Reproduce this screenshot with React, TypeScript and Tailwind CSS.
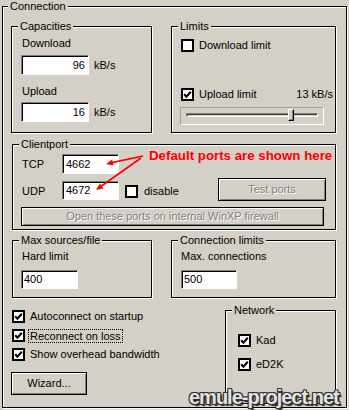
import React from "react";

type P = { children?: React.ReactNode; className?: string };

function Group({ label, className = "", children }: P & { label: string }) {
  return (
    <fieldset
      className={`m-0 p-0 min-w-0 border border-black shadow-[inset_1px_1px_0_#fff,1px_1px_0_#fff] ${className}`}
    >
      <legend className="ml-[6px] px-[2px] leading-[13px] bg-[#d4d0c8]">{label}</legend>
      {children}
    </fieldset>
  );
}

function Check({ checked = false, className = "" }: { checked?: boolean; className?: string }) {
  return (
    <span
      className={`w-[13px] h-[13px] shrink-0 border-2 border-black bg-white flex items-center justify-center ${className}`}
    >
      {checked && (
        <svg width="9" height="9" viewBox="0 0 9 9">
          <path d="M1.2 4.2 L3.4 6.6 L7.8 1.8" stroke="#000" strokeWidth="2.1" fill="none" />
        </svg>
      )}
    </span>
  );
}

function Field({ children, className = "" }: P) {
  return (
    <div
      className={`bg-white border border-t-[#808080] border-l-[#808080] border-r-white border-b-white shadow-[inset_1px_1px_0_#000] flex items-center ${className}`}
    >
      {children}
    </div>
  );
}

function Btn({ children, className = "", disabled = false }: P & { disabled?: boolean }) {
  return (
    <div
      className={`border border-black shadow-[inset_1px_1px_0_#fff,inset_-1px_-1px_0_#808080] flex items-center justify-center ${
        disabled ? "text-[#808080] [text-shadow:1px_1px_0_#fff]" : "text-black"
      } ${className}`}
    >
      {children}
    </div>
  );
}

export default function App() {
  return (
    <div className="relative w-[349px] h-[410px] overflow-hidden bg-[#d4d0c8] text-black text-[11px] leading-[13px] font-['Liberation_Sans',Arial,sans-serif]">
      <fieldset className="m-0 p-0 min-w-0 ml-[2px] w-[345px] h-[408px] border border-black shadow-[inset_1px_1px_0_#fff,1px_1px_0_#fff]">
        <legend className="ml-[5px] px-[2px] leading-[13px] bg-[#d4d0c8]">Connection</legend>

        {/* Row 1 */}
        <div className="flex mt-[7px]">
          <Group label="Capacities" className="ml-[8px] w-[141px] h-[113px]">
            <div className="mt-[4px] ml-[10px]">Download</div>
            <div className="flex items-center mt-[5px] ml-[9px]">
              <Field className="w-[68px] h-[20px] justify-end pr-[3px]">96</Field>
              <span className="ml-[5px]">kB/s</span>
            </div>
            <div className="mt-[10px] ml-[10px]">Upload</div>
            <div className="flex items-center mt-[4px] ml-[9px]">
              <Field className="w-[68px] h-[20px] justify-end pr-[3px]">16</Field>
              <span className="ml-[5px]">kB/s</span>
            </div>
          </Group>

          <Group label="Limits" className="ml-[19px] w-[165px] h-[113px]">
            <div className="flex items-center mt-[6px] ml-[9px]">
              <Check />
              <span className="ml-[5px]">Download limit</span>
            </div>
            <div className="flex items-center mt-[36px] ml-[9px] mr-[2px]">
              <Check checked />
              <span className="ml-[5px]">Upload limit</span>
              <span className="ml-auto">13 kB/s</span>
            </div>
            <div className="relative mt-[6px] ml-[8px] w-[144px] h-[18px] border border-t-[#a0a0a0] border-l-[#a0a0a0] border-r-white border-b-white">
              <div className="absolute left-[5px] right-[5px] top-[5px] h-[4px] border border-t-[#808080] border-l-[#808080] border-r-white border-b-white shadow-[inset_1px_1px_0_#404040]" />
              <div className="absolute left-[107px] top-[1px] w-[6px] h-[12px] bg-[#d4d0c8] border border-t-white border-l-white border-r-black border-b-black shadow-[inset_-1px_-1px_0_#808080]" />
            </div>
          </Group>
        </div>

        {/* Row 2 */}
        <Group label="Clientport" className="mt-[5px] ml-[9px] w-[324px] h-[92px]">
          <div className="flex items-center mt-[3px] h-[20px]">
            <span className="ml-[9px] w-[40px]">TCP</span>
            <Field className="w-[57px] h-[20px] pl-[3px]">4662</Field>
          </div>
          <div className="flex items-end mt-[4px] h-[23px]">
            <span className="ml-[9px] w-[40px] mb-[3px]">UDP</span>
            <Field className="w-[57px] h-[19px] pl-[3px] mb-[1px]">4672</Field>
            <Check className="ml-[6px] mb-[3px]" />
            <span className="ml-[6px] mb-[3px]">disable</span>
            <Btn disabled className="ml-auto mr-[9px] w-[108px] h-[23px]">
              Test ports
            </Btn>
          </div>
          <Btn disabled className="mt-[6px] ml-[8px] w-[303px] h-[19px]">
            Open these ports on internal WinXP firewall
          </Btn>
        </Group>

        {/* Row 3 */}
        <div className="flex mt-[4px]">
          <Group label="Max sources/file" className="ml-[9px] w-[140px] h-[64px]">
            <div className="mt-[3px] ml-[9px]">Hard limit</div>
            <Field className="mt-[7px] ml-[8px] w-[57px] h-[19px] pl-[2px]">400</Field>
          </Group>
          <Group label="Connection limits" className="ml-[19px] w-[165px] h-[64px]">
            <div className="mt-[3px] ml-[9px]">Max. connections</div>
            <Field className="mt-[7px] ml-[9px] w-[56px] h-[19px] pl-[2px]">500</Field>
          </Group>
        </div>

        {/* Row 4 */}
        <div className="flex">
          <div className="flex-1 flex flex-col mt-[12px]">
            <div className="flex flex-col gap-[6px] ml-[9px]">
              <div className="flex items-center h-[13px]">
                <Check checked />
                <span className="ml-[5px]">Autoconnect on startup</span>
              </div>
              <div className="flex items-center h-[13px]">
                <Check checked />
                <span className="ml-[3px] px-[1px] leading-[12px] border border-dotted border-black">
                  Reconnect on loss
                </span>
              </div>
              <div className="flex items-center h-[13px]">
                <Check checked />
                <span className="ml-[5px]">Show overhead bandwidth</span>
              </div>
            </div>
            <Btn className="mt-[11px] ml-[8px] w-[76px] h-[23px]">Wizard...</Btn>
          </div>
          <Group label="Network" className="mt-[6px] mr-[10px] w-[111px] h-[100px]">
            <div className="flex items-center mt-[17px] ml-[12px]">
              <Check checked />
              <span className="ml-[5px]">Kad</span>
            </div>
            <div className="flex items-center mt-[11px] ml-[12px]">
              <Check checked />
              <span className="ml-[5px]">eD2K</span>
            </div>
          </Group>
        </div>
      </fieldset>

      {/* Annotation overlay */}
      <span className="absolute left-[149px] top-[148px] text-[13.3px] leading-[15px] font-bold text-[#ff0000] whitespace-nowrap">
        Default ports are shown here
      </span>
      <svg className="absolute left-0 top-0 pointer-events-none" width="349" height="410">
        <line x1="143" y1="156" x2="112" y2="162.6" stroke="#ff0000" strokeWidth="1.6" />
        <polygon points="106,164 112.2,159.6 113.5,165.5" fill="#ff0000" />
        <line x1="141" y1="158" x2="101.5" y2="186" stroke="#ff0000" strokeWidth="1.6" />
        <polygon points="96,190 99.96,183.5 103.44,188.4" fill="#ff0000" />
      </svg>

      {/* Watermark */}
      <span className="absolute left-[189px] top-[387px] text-[20px] leading-[20px] font-bold tracking-[-1px] text-[#e2e2e2] whitespace-nowrap [text-shadow:-1px_-1px_0_#333,1px_-1px_0_#333,-1px_1px_0_#333,1px_1px_0_#333,0_1px_0_#333,0_-1px_0_#333,1px_0_0_#333,-1px_0_0_#333,2px_2px_1px_#222]">
        emule-project.net
      </span>
    </div>
  );
}
